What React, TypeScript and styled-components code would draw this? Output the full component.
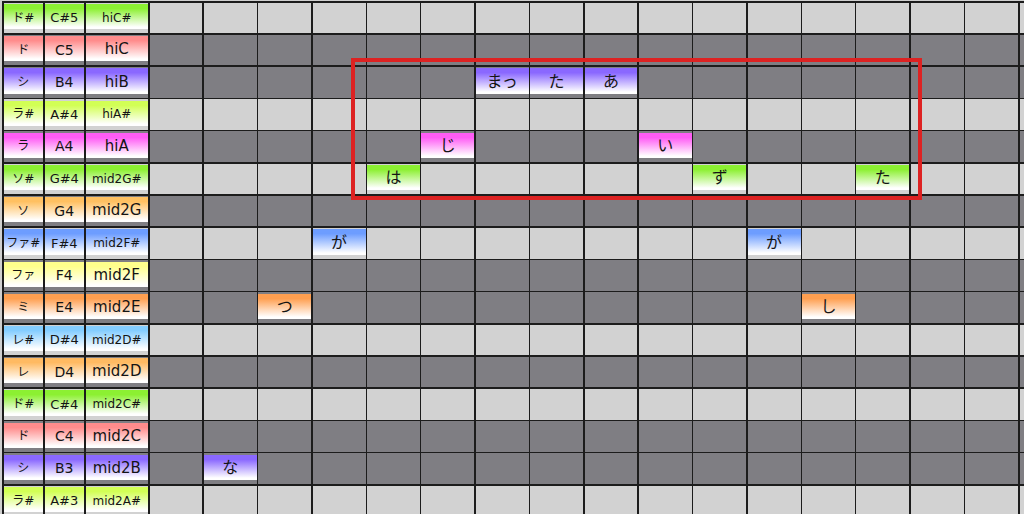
import React from "react";
import styled, { createGlobalStyle } from "styled-components";

const Global = createGlobalStyle`
  html, body {
    margin: 0;
    padding: 0;
    overflow: hidden;
    background: #cfcfcf;
    width: 1024px;
    height: 514px;
  }
  #root { width: 1024px; height: 514px; overflow: hidden; }
`;

const Stage = styled.div`
  position: relative;
  width: 1024px;
  height: 514px;
  overflow: hidden;
`;

const Sheet = styled.div`
  display: grid;
  grid-template-columns: 39.5px 39.5px 62.5px repeat(17, 52.875px);
  grid-auto-rows: 30.71px;
  gap: 1.5px;
  padding: 1.5px;
  margin: 1px 0 0 2px;
  width: max-content;
  background: #1c1c1c;
  font-family: "DejaVu Sans", "Noto Sans CJK JP", sans-serif;
  color: #141414;
`;

const Cell = styled.div<{ $light: boolean }>`
  background: ${(p) => (p.$light ? "#d2d2d2" : "#7f7e83")};
  display: flex;
  flex-direction: column;
  padding: 1.5px 0 4px 0;
  box-sizing: border-box;
  min-width: 0;
`;

const Chip = styled.div<{ $color: string; $size: number; $shift: number }>`
  flex: 1;
  display: flex;
  align-items: center;
  justify-content: center;
  padding-top: ${(p) => p.$shift}px;
  box-sizing: border-box;
  background: linear-gradient(
    to bottom,
    ${(p) => p.$color} 0%,
    ${(p) => p.$color} 18%,
    #ffffff 92%
  );
  font-size: ${(p) => p.$size}px;
  line-height: 1;
  white-space: nowrap;
  overflow: hidden;
`;

const Frame = styled.div`
  position: absolute;
  left: 351px;
  top: 58px;
  width: 571px;
  height: 142px;
  box-sizing: border-box;
  border: 4px solid #dd2222;
  pointer-events: none;
`;

type Row = {
  kana: string;
  note: string;
  name: string;
  color: string;
  sharp: boolean;
};

const GREEN = "#8cf032";
const rows: Row[] = [
  { kana: "ド#", note: "C#5", name: "hiC#", color: GREEN, sharp: true },
  { kana: "ド", note: "C5", name: "hiC", color: "#ff8c8c", sharp: false },
  { kana: "シ", note: "B4", name: "hiB", color: "#8a68ff", sharp: false },
  { kana: "ラ#", note: "A#4", name: "hiA#", color: "#d2ff55", sharp: true },
  { kana: "ラ", note: "A4", name: "hiA", color: "#ff5cf5", sharp: false },
  { kana: "ソ#", note: "G#4", name: "mid2G#", color: GREEN, sharp: true },
  { kana: "ソ", note: "G4", name: "mid2G", color: "#ffc061", sharp: false },
  { kana: "ファ#", note: "F#4", name: "mid2F#", color: "#6d9dff", sharp: true },
  { kana: "ファ", note: "F4", name: "mid2F", color: "#ffff8c", sharp: false },
  { kana: "ミ", note: "E4", name: "mid2E", color: "#ff9f50", sharp: false },
  { kana: "レ#", note: "D#4", name: "mid2D#", color: "#84cdff", sharp: true },
  { kana: "レ", note: "D4", name: "mid2D", color: "#ffba62", sharp: false },
  { kana: "ド#", note: "C#4", name: "mid2C#", color: GREEN, sharp: true },
  { kana: "ド", note: "C4", name: "mid2C", color: "#ff8c8c", sharp: false },
  { kana: "シ", note: "B3", name: "mid2B", color: "#8a68ff", sharp: false },
  { kana: "ラ#", note: "A#3", name: "mid2A#", color: "#d2ff55", sharp: true },
];

const lyrics: Record<number, Record<number, string>> = {
  2: { 6: "まっ", 7: "た", 8: "あ" },
  4: { 5: "じ", 9: "い" },
  5: { 4: "は", 10: "ず", 13: "た" },
  7: { 3: "が", 11: "が" },
  9: { 2: "つ", 12: "し" },
  14: { 1: "な" },
};

const STEPS = 17;

export default function App() {
  return (
    <Stage>
      <Global />
      <Sheet>
        {rows.map((r, ri) => {
          const light = r.sharp;
          const notes = lyrics[ri] || {};
          return (
            <React.Fragment key={ri}>
              <Cell $light={light}>
                <Chip $color={r.color} $size={12} $shift={2}>
                  {r.kana}
                </Chip>
              </Cell>
              <Cell $light={light}>
                <Chip $color={r.color} $size={r.sharp ? 13 : 14} $shift={2}>
                  {r.note}
                </Chip>
              </Cell>
              <Cell $light={light}>
                <Chip $color={r.color} $size={r.sharp ? 12 : 15} $shift={2}>
                  {r.name}
                </Chip>
              </Cell>
              {Array.from({ length: STEPS }, (_, ci) => (
                <Cell key={ci} $light={light}>
                  {notes[ci] ? (
                    <Chip $color={r.color} $size={16} $shift={1}>
                      {notes[ci]}
                    </Chip>
                  ) : null}
                </Cell>
              ))}
            </React.Fragment>
          );
        })}
      </Sheet>
      <Frame />
    </Stage>
  );
}
